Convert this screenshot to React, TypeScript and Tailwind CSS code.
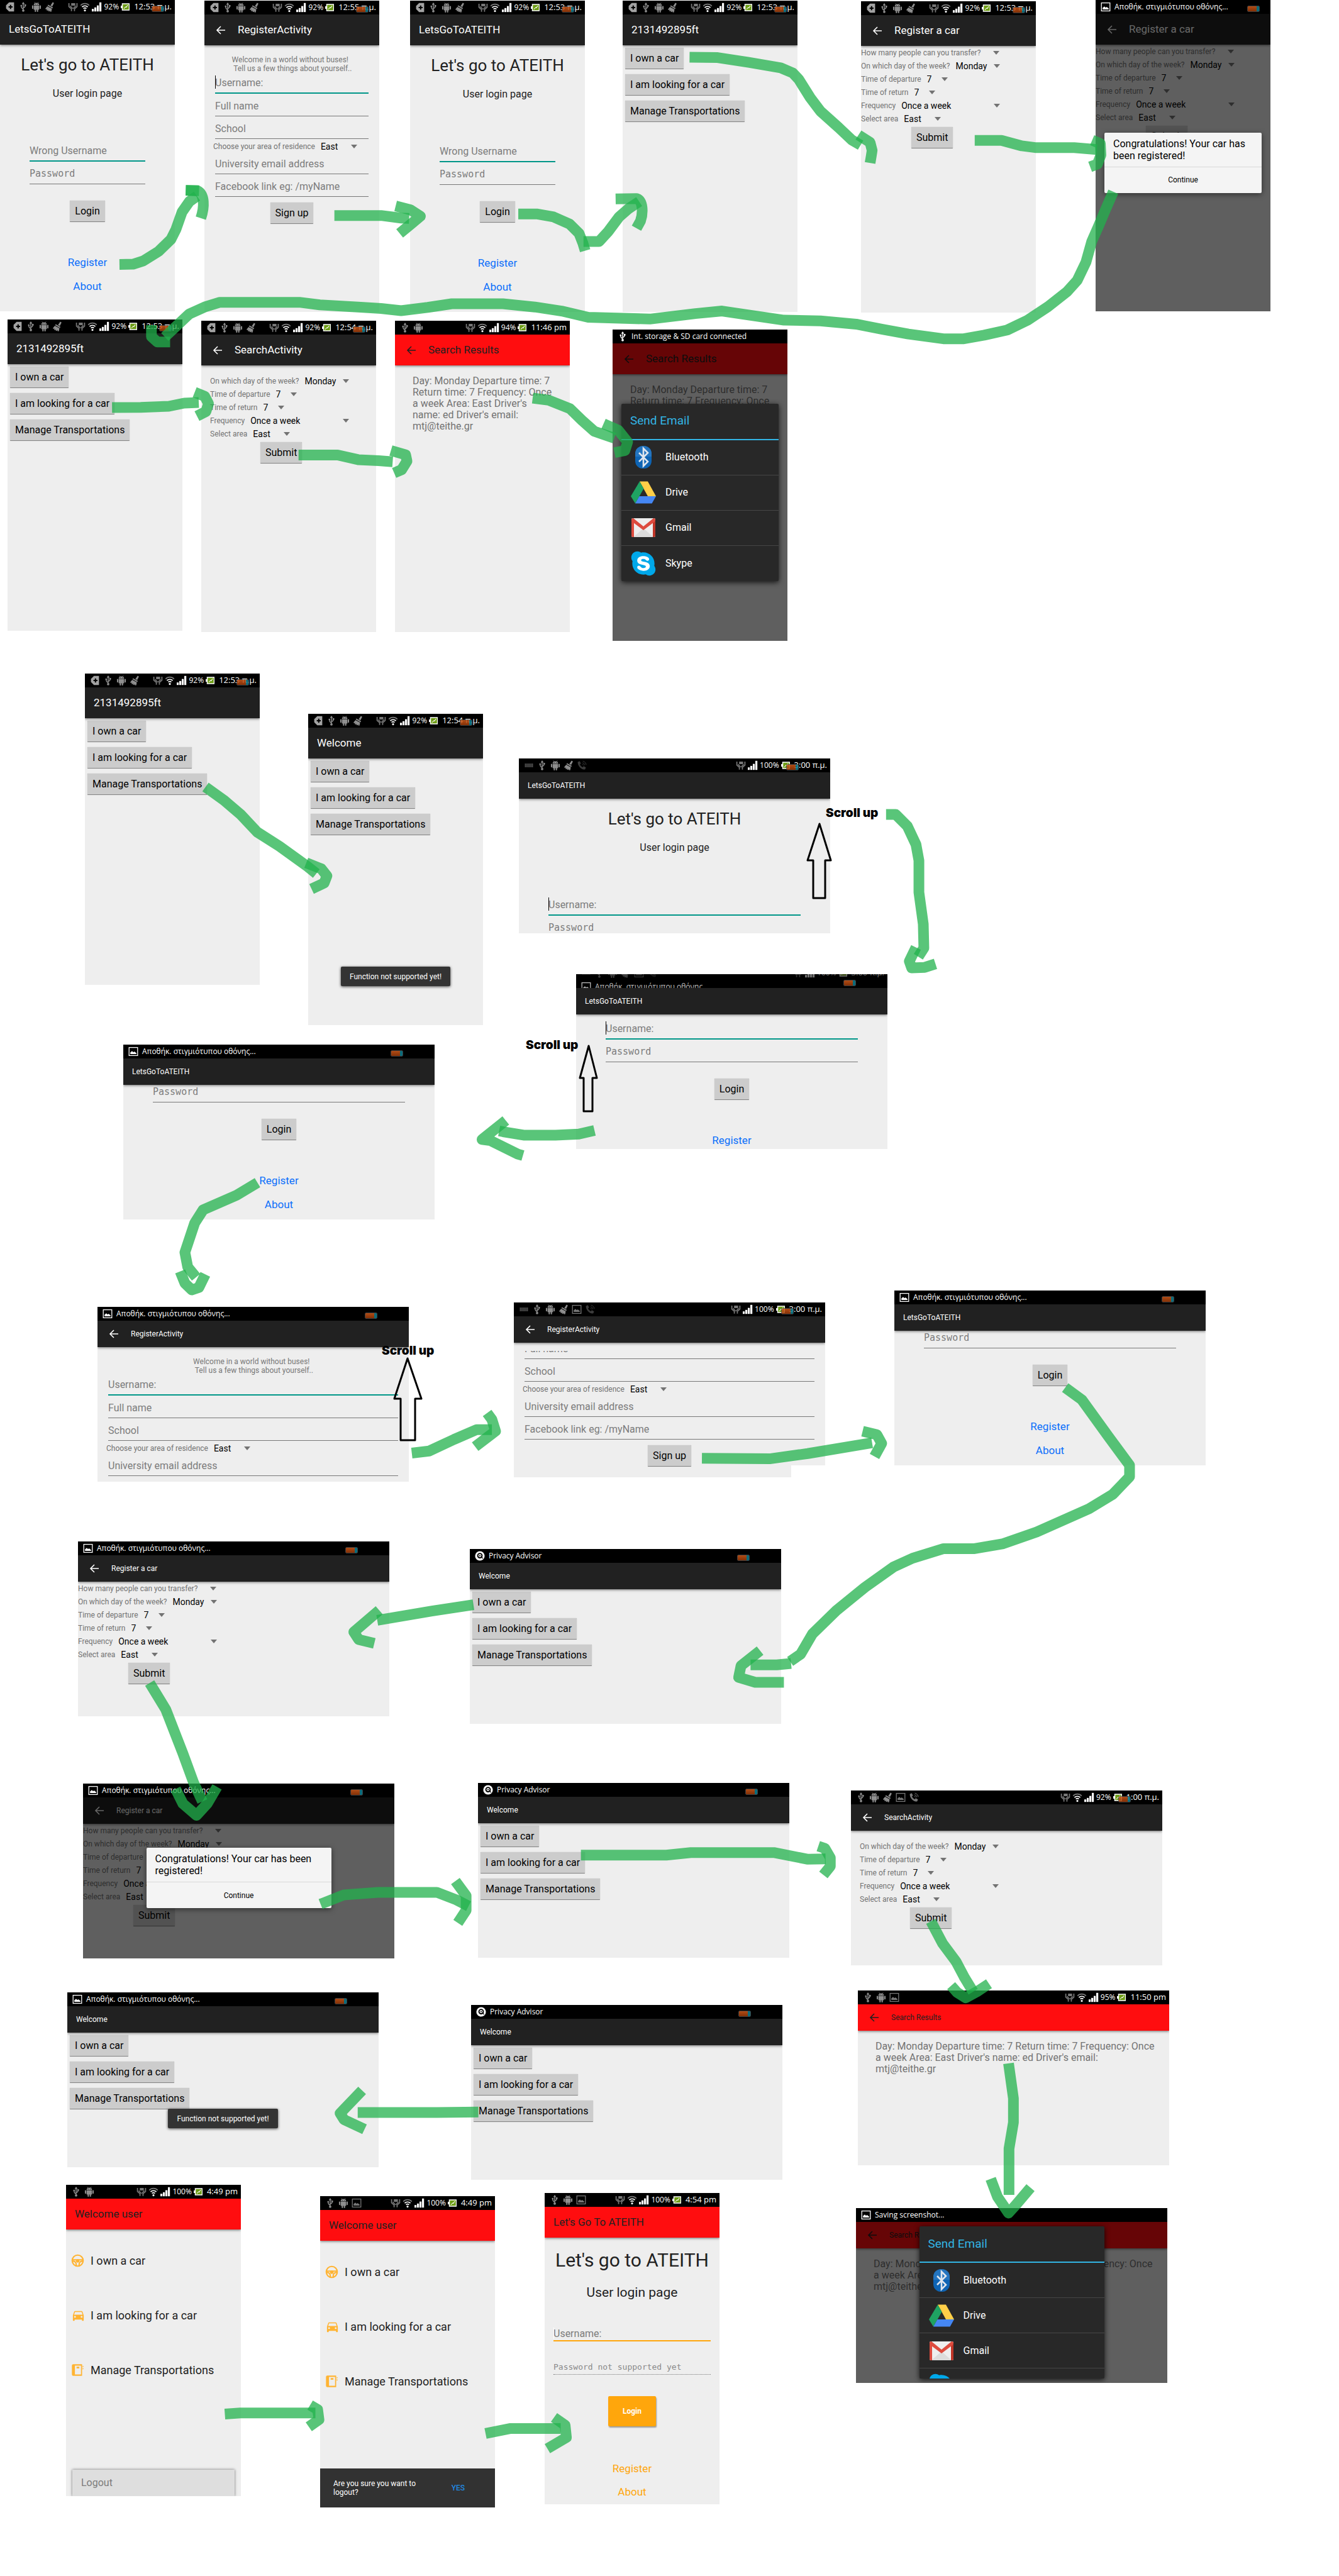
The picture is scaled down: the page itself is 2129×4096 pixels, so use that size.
import React from "react";
import { FaSkype } from "react-icons/fa";
import { MdDirectionsCar } from "react-icons/md";

/* ---------- status bar icons ---------- */

const small = "h-[16px] w-[16px] shrink-0";

function TagIcon() {
  return (
    <svg viewBox="0 0 20 20" className={small}>
      <path d="M8 1h10v18H8L2 13V7z" fill="#a3a3a3" />
      <path d="M11 6v8M7 10h8" stroke="#000" strokeWidth="2.6" />
    </svg>
  );
}

function UsbIcon({ bright = false }: { bright?: boolean }) {
  const c = bright ? "#fff" : "#8f8f8f";
  return (
    <svg viewBox="0 0 20 20" className={small}>
      <path d="M10 3v13M10 14c-3-1-4-3-4-6M10 12c3-1 4-2 4-5" fill="none" stroke={c} strokeWidth="1.8" />
      <path d="M10 0l3 4.5H7z" fill={c} />
      <circle cx="10" cy="17.3" r="2.4" fill={c} />
      <circle cx="6" cy="7.5" r="1.7" fill={c} />
      <rect x="12.4" y="5" width="3.2" height="3.2" fill={c} />
    </svg>
  );
}

function AndroidIcon() {
  return (
    <svg viewBox="0 0 20 20" className={small} fill="#8f8f8f">
      <path d="M4.6 6.2a5.4 4.4 0 0 1 10.8 0z" />
      <path d="M6 .5l2 3M14 .5l-2 3" stroke="#8f8f8f" strokeWidth="0.9" />
      <path d="M4.6 7h10.8v8.5H4.6z" />
      <rect x="1.2" y="7" width="2.5" height="7" rx="1.2" />
      <rect x="16.3" y="7" width="2.5" height="7" rx="1.2" />
      <rect x="6.6" y="14" width="2.6" height="6" rx="1.2" />
      <rect x="10.8" y="14" width="2.6" height="6" rx="1.2" />
      <circle cx="7.8" cy="4.3" r="0.7" fill="#000" />
      <circle cx="12.2" cy="4.3" r="0.7" fill="#000" />
    </svg>
  );
}

function BroomIcon() {
  return (
    <svg viewBox="0 0 20 20" className={small} fill="#8f8f8f">
      <path d="M16 .5l2.600 1.600-3.400 7-3.600-2z" />
      <path d="M7 5.600l9.400 5.200-1.200 2.200-9.400-5.400z" />
      <path d="M5.200 8.600l9.200 5.200-1.200 5.800-2.600-.2.300-2.400-1.700 2.100-2.400-.9 1-2.200-2.200 1.500-2-1.400 1.700-1.800-2.900.7-1-1.600z" />
    </svg>
  );
}

function CradleIcon() {
  return (
    <svg viewBox="0 0 20 20" className={small}>
      <path d="M6.500 2.500h8v5h-8z" fill="#777" />
      <path d="M2 2.500v7l5 4.500v4.500M18 2.500v7L13 14v4.500" fill="none" stroke="#777" strokeWidth="2.200" />
      <path d="M4.500 8l5 5.500M15.500 8l-5 5.500" stroke="#777" strokeWidth="2" />
    </svg>
  );
}

function KeyboardIcon() {
  return (
    <svg viewBox="0 0 20 20" className={small}>
      <path d="M2 7.5h16M2 10h16M2 12.5h16" stroke="#777" strokeWidth="1.6" strokeDasharray="1.6 0.8" />
    </svg>
  );
}

function PictureIcon({ bright = false }: { bright?: boolean }) {
  const c = bright ? "#fff" : "#777";
  return (
    <svg viewBox="0 0 20 20" className={small}>
      <rect x="1.5" y="2" width="17" height="16" fill="none" stroke={c} strokeWidth="1.6" />
      <path d="M4 15v-3l3.5-3 2.5 2.5 2-1.5 4 3v2z" fill={c} />
    </svg>
  );
}

function PhoneIcon({ faint = false }: { faint?: boolean }) {
  const c = faint ? "#3b3b3b" : "#777";
  return (
    <svg viewBox="0 0 20 20" className={small}>
      <path d="M2 3l4-1.5 2.200 4.600-2 2c1 2.400 2.800 4.300 5.400 5.600l2.200-2 4.400 2.500-1.700 4C9 18.500 1.500 11 2 3z" fill={c} />
      <path d="M11 7.500a3 3 0 0 1 2 2.200M11.500 4.500a6 6 0 0 1 4.300 5M12 1.500a9 9 0 0 1 6.800 7.500" fill="none" stroke={c} strokeWidth="1.200" />
    </svg>
  );
}

function WifiIcon() {
  return (
    <svg viewBox="0 0 20 20" className={small} fill="none" strokeWidth="2">
      <path d="M1.500 7a11.500 11.500 0 0 1 17 0" stroke="#777" />
      <path d="M4.300 10.200a7.800 7.800 0 0 1 11.400 0M7 13.300a4.200 4.200 0 0 1 6 0" stroke="#fff" />
      <circle cx="10" cy="17" r="2" fill="#fff" />
    </svg>
  );
}

function SignalIcon() {
  return (
    <svg viewBox="0 0 20 20" className={small} fill="#fff">
      <rect x="0" y="14" width="4" height="5" />
      <rect x="5" y="11" width="4" height="8" />
      <rect x="10" y="7" width="4" height="12" />
      <rect x="15" y="1" width="4" height="18" />
    </svg>
  );
}

function BatteryIcon() {
  return (
    <svg viewBox="0 0 14 12" className="h-[12px] w-[14px] shrink-0">
      <rect x="0" y="4" width="2" height="4" fill="#fff" />
      <rect x="2.500" y="1" width="11" height="10" fill="#6d9c14" stroke="#fff" strokeWidth="1.500" />
      <path d="M5 9l2.500-3 1 1L11 3 9 6.500l-1-1z" fill="#fff" stroke="#fff" strokeWidth="0.800" />
    </svg>
  );
}

function AdvisorIcon() {
  return (
    <svg viewBox="0 0 20 20" className={small}>
      <circle cx="10" cy="10" r="9.500" fill="#fff" />
      <circle cx="10" cy="9.500" r="4.300" fill="none" stroke="#000" strokeWidth="2.400" />
      <circle cx="10" cy="9.500" r="1.300" fill="#000" />
      <path d="M14 10v3.500l2 1.500" fill="none" stroke="#000" strokeWidth="1.600" />
    </svg>
  );
}

const icons = {
  tag: <TagIcon />,
  usb: <UsbIcon />,
  android: <AndroidIcon />,
  broom: <BroomIcon />,
  keyboard: <KeyboardIcon />,
  picture: <PictureIcon />,
  phone: <PhoneIcon />,
  faintPhone: <PhoneIcon faint />,
};
type IconName = keyof typeof icons;

/* ---------- status bar ---------- */

function Widget({ landscape }: { landscape?: boolean }) {
  return (
    <span
      className={`absolute top-[9px] flex h-[10px] w-[20px] overflow-hidden rounded-[2px] border border-[#4c4c4c] opacity-85 ${
        landscape ? "right-[50px]" : "right-[17px]"
      }`}
    >
      <span className="flex-1 bg-linear-to-b from-[#cf5a1a] to-[#9c3a08]" />
      <span className="w-[4px] bg-[#0d7f92]" />
    </span>
  );
}

function StatusIcons({ left, percent, time, wifi = true }: { left: IconName[]; percent: string; time: string; wifi?: boolean }) {
  return (
    <div className="flex h-[22px] shrink-0 items-center pr-[5px] pl-[8px] text-white">
      <div className="flex gap-[5px]">
        {left.map((n) => (
          <React.Fragment key={n}>{icons[n]}</React.Fragment>
        ))}
      </div>
      <div className="ml-auto flex items-center gap-[3px]">
        <CradleIcon />
        {wifi && <WifiIcon />}
        <SignalIcon />
        <span className="text-[12px]">{percent}</span>
        <BatteryIcon />
        <span className="pl-1 text-[13px] whitespace-nowrap">{time}</span>
      </div>
    </div>
  );
}

function StatusNote({ icon, text }: { icon: React.ReactNode; text: string }) {
  return (
    <div className="flex h-[22px] shrink-0 items-center gap-[6px] pl-[8px] text-[12px] whitespace-nowrap text-white">
      {icon}
      <span>{text}</span>
    </div>
  );
}

const phoneLeft: IconName[] = ["tag", "usb", "android", "broom"];
const savingNote = <StatusNote icon={<PictureIcon bright />} text="Αποθήκ. στιγμιότυπου οθόνης..." />;
const advisorNote = <StatusNote icon={<AdvisorIcon />} text="Privacy Advisor" />;
const phoneStatus = (time: string) => <StatusIcons left={phoneLeft} percent="92%" time={time} />;

/* ---------- screen frame ---------- */

type ScreenProps = {
  place: string;
  title: string;
  status: React.ReactNode;
  landscape?: boolean;
  widget?: boolean;
  back?: boolean;
  red?: boolean;
  dialog?: React.ReactNode;
  footer?: React.ReactNode;
  children: React.ReactNode;
};

function Screen({ place, title, status, landscape, widget, back, red, dialog, footer, children }: ScreenProps) {
  return (
    <section
      aria-label={title}
      className={`absolute flex flex-col overflow-hidden bg-[#eeeeee] ${landscape ? "h-[278px] w-[495px]" : "h-[495px] w-[278px]"} ${place}`}
    >
      <div className="relative h-[22px] shrink-0 overflow-hidden bg-black [font-family:'Open_Sans',sans-serif]">
        {status}
        {widget && <Widget landscape={landscape} />}
      </div>
      <header
        className={`relative z-10 flex shrink-0 items-center px-[14px] shadow-[0_1px_4px_rgba(0,0,0,0.55)] ${
          landscape ? "h-[42px]" : "h-[49px]"
        } ${red ? "bg-[#ff0d0f] text-[#212121]" : "bg-[#212121] text-white"}`}
      >
        {back && (
          <button type="button" aria-label="Back" className="mr-[18px] ml-[3px]">
            <svg viewBox="0 0 18 18" className="h-[18px] w-[18px]" fill="none" stroke="currentColor" strokeWidth="1.600">
              <path d="M16 9H3M9 3L3 9l6 6" />
            </svg>
          </button>
        )}
        <h2 className={`font-normal whitespace-nowrap ${landscape ? "text-[12px]" : "text-[17px]"}`}>{title}</h2>
      </header>
      <div className="relative min-h-0 flex-1 overflow-hidden">{children}</div>
      {footer}
      {dialog && (
        <div className="absolute inset-x-0 top-[22px] bottom-0 z-20 flex items-center justify-center bg-black/60">{dialog}</div>
      )}
    </section>
  );
}

/* ---------- controls ---------- */

function GreyButton({ children, extra = "" }: { children: React.ReactNode; extra?: string }) {
  return (
    <button
      type="button"
      className={`h-[34px] rounded-[1px] border-b border-[#858585] bg-[#cccccc] px-2 text-[16px] whitespace-nowrap text-black shadow-[0_0_1px_rgba(0,0,0,0.4)] ${extra}`}
    >
      {children}
    </button>
  );
}

function Field({ hint, active, cursor, password }: { hint: string; active?: boolean; cursor?: boolean; password?: boolean }) {
  return (
    <div className="relative">
      {cursor && <span className="absolute bottom-[8px] left-0 h-[21px] w-px bg-black" />}
      <input
        type={password ? "password" : "text"}
        aria-label={hint}
        placeholder={hint}
        className={`block h-[36px] w-full bg-transparent pt-[3px] outline-none placeholder:text-[#7c7c7c] ${
          active ? "border-b-2 border-[#009688]" : "border-b border-[#777777]"
        } ${password ? "text-[15px] [font-family:'DejaVu_Sans_Mono',monospace]" : "text-[16px]"}`}
      />
    </div>
  );
}

function Caret() {
  return (
    <svg viewBox="0 0 10 6" className="pointer-events-none absolute top-1/2 right-0 h-[6px] w-[10px] -translate-y-1/2" fill="#737373">
      <path d="M0 0h10L5 6z" />
    </svg>
  );
}

function Picker({ label, value, width, extra = "h-[21px] items-center" }: { label: string; value: string; width: string; extra?: string }) {
  return (
    <label className={`flex gap-[9px] text-[12px] whitespace-nowrap text-[#737373] ${extra}`}>
      {label}
      <span className={`relative ${width}`}>
        <select className="block h-4 w-full appearance-none bg-transparent text-[14px] leading-4 text-black outline-none" defaultValue={value}>
          <option>{value}</option>
        </select>
        <Caret />
      </span>
    </label>
  );
}

/* ---------- screen bodies ---------- */

function LoginBody({ shift = "", hint = "Username:", cursor }: { shift?: string; hint?: string; cursor?: boolean }) {
  return (
    <div className={shift}>
      <div className="flex flex-col items-center px-[47px] pt-[14px]">
        <h1 className="text-[26px] leading-[36px] whitespace-nowrap text-[#212121]">Let's go to ATEITH</h1>
        <p className="mt-[18px] text-[16px] leading-5 text-[#212121]">User login page</p>
        <div className="mt-[62px] w-full">
          <Field hint={hint} active cursor={cursor} />
          <Field hint="Password" password />
        </div>
        <GreyButton extra="mt-[26px]">Login</GreyButton>
        <a href="#register" className="mt-[52px] text-[17px] leading-6 text-[#0b6efb]">
          Register
        </a>
        <a href="#about" className="mt-[14px] text-[17px] leading-6 text-[#0b6efb]">
          About
        </a>
      </div>
    </div>
  );
}

function RegisterBody({ shift = "", cursor }: { shift?: string; cursor?: boolean }) {
  return (
    <div className={shift}>
      <div className="flex flex-col items-center px-[17px] pt-4">
        <p className="h-[25px] text-[12px] leading-[14px] whitespace-pre text-[#777777]">
          {"Welcome in a world without buses!\n Tell us a few things about yourself.."}
        </p>
        <div className="w-full">
          <Field hint="Username:" active cursor={cursor} />
          <Field hint="Full name" />
          <Field hint="School" />
          <div className="-ml-[3px]">
            <Picker label="Choose your area of residence" value="East" width="w-[58px]" extra="h-[20px] items-end leading-4" />
          </div>
          <Field hint="University email address" />
          <Field hint="Facebook link eg: /myName" />
        </div>
        <GreyButton extra="mt-[9px]">Sign up</GreyButton>
      </div>
    </div>
  );
}

function CarForm({ search }: { search?: boolean }) {
  return (
    <div className={search ? "p-[14px]" : ""}>
      {!search && <Picker label="How many people can you transfer?" value="" width="w-[21px] h-4" />}
      <Picker label="On which day of the week?" value="Monday" width="w-[70px]" />
      <Picker label="Time of departure" value="7" width="w-[33px]" />
      <Picker label="Time of return" value="7" width="w-[33px]" />
      <Picker label="Frequency" value="Once a week" width="w-[157px]" />
      <Picker label="Select area" value="East" width="w-[59px]" />
      <GreyButton extra="mt-[3px] ml-[80px]">Submit</GreyButton>
    </div>
  );
}

function MenuBody() {
  return (
    <div className="flex flex-col items-start gap-2 px-1 pt-1">
      <GreyButton>I own a car</GreyButton>
      <GreyButton>I am looking for a car</GreyButton>
      <GreyButton>Manage Transportations</GreyButton>
    </div>
  );
}

function Toast() {
  return (
    <div className="absolute inset-x-0 bottom-[62px] z-10 flex justify-center">
      <p
        role="status"
        className="flex h-[31px] items-center rounded-[2px] bg-[#333333] px-[14px] text-[12px] whitespace-nowrap text-white shadow-[0_1px_4px_rgba(0,0,0,0.7)]"
      >
        Function not supported yet!
      </p>
    </div>
  );
}

function ResultsBody({ lines }: { lines: string[] }) {
  return (
    <p className="flex flex-col px-[28px] pt-4 text-[16px] leading-[18px] whitespace-nowrap text-[#737373]">
      {lines.map((l) => (
        <span key={l}>{l}</span>
      ))}
    </p>
  );
}

const tallResults = [
  "Day: Monday Departure time: 7",
  "Return time: 7 Frequency: Once",
  "a week Area: East Driver's",
  "name: ed Driver's email:",
  "mtj@teithe.gr",
];
const wideResults = [
  "Day: Monday Departure time: 7 Return time: 7 Frequency: Once",
  "a week Area: East Driver's name: ed Driver's email:",
  "mtj@teithe.gr",
];

function Congrats({ lines, width }: { lines: string[]; width: string }) {
  return (
    <div role="dialog" aria-label="Car registered" className={`rounded-[2px] bg-[#f4f4f4] text-black shadow-[0_2px_8px_rgba(0,0,0,0.5)] ${width}`}>
      <p className="flex h-[55px] flex-col justify-center border-b border-[#d8d8d8] px-[14px] text-[16px] leading-[19px] whitespace-nowrap">
        {lines.map((l) => (
          <span key={l}>{l}</span>
        ))}
      </p>
      <button type="button" className="h-[41px] w-full text-[12px]">
        Continue
      </button>
    </div>
  );
}

function BluetoothLogo() {
  return (
    <svg viewBox="0 0 42 42" className="h-[42px] w-[42px]">
      <rect x="8" y="3" width="26" height="36" rx="12" fill="#0e64b4" />
      <path d="M8 20V15A13 12 0 0 1 34 15V20z" fill="#3a86cc" opacity="0.500" />
      <path d="M14 14l14 14-7 7V7l7 7-14 14" fill="none" stroke="#dfe6ee" strokeWidth="2.600" />
    </svg>
  );
}

function DriveLogo() {
  return (
    <svg viewBox="0 0 42 42" className="h-[42px] w-[42px]">
      <path d="M15 3.500h13L41 27H28z" fill="#ffcf48" />
      <path d="M15 3.500L21.500 15 8 38.500 1 27z" fill="#1fa262" />
      <path d="M14.500 27H41l-6.500 11.500H8z" fill="#4587f4" />
    </svg>
  );
}

function GmailLogo() {
  return (
    <svg viewBox="0 0 42 42" className="h-[42px] w-[42px]">
      <rect x="2" y="6" width="38" height="30" rx="2" fill="#eeeeee" />
      <path d="M5 36l16-14 16 14z" fill="#dcdcdc" />
      <path d="M2 8v26a2 2 0 0 0 2 2h2V11z" fill="#dd4b3e" />
      <path d="M40 8v26a2 2 0 0 1-2 2h-2V11z" fill="#bf3528" />
      <path d="M2 8.500A2.500 2.500 0 0 1 5 6l16 13L37 6a2.500 2.500 0 0 1 3 2.500l-1 3L21 25 3 11.500z" fill="#dd4b3e" />
    </svg>
  );
}

function SkypeLogo() {
  return (
    <span className="relative flex h-[42px] w-[42px] items-center justify-center">
      <span className="absolute h-[30px] w-[26px] rounded-full bg-white" />
      <FaSkype className="relative h-[44px] w-[44px] shrink-0 text-[#00a8ea]" />
    </span>
  );
}

function Chooser({ size }: { size: string }) {
  const apps = [
    { name: "Bluetooth", logo: <BluetoothLogo /> },
    { name: "Drive", logo: <DriveLogo /> },
    { name: "Gmail", logo: <GmailLogo /> },
    { name: "Skype", logo: <SkypeLogo /> },
  ];
  return (
    <div role="dialog" aria-label="Send Email" className={`overflow-hidden rounded-[2px] bg-[#282828] shadow-[0_2px_8px_rgba(0,0,0,0.8)] ${size}`}>
      <h3 className="flex h-[58px] items-center border-b-2 border-[#33b5e5] px-[14px] text-[19px] text-[#33b5e5]">Send Email</h3>
      <ul className="divide-y divide-[#464646]">
        {apps.map((a) => (
          <li key={a.name} className="h-[56px]">
            <button type="button" className="flex h-full w-full items-center gap-[14px] px-[14px] text-[16px] text-white">
              {a.logo}
              {a.name}
            </button>
          </li>
        ))}
      </ul>
    </div>
  );
}

function WheelIcon() {
  return (
    <svg viewBox="0 0 24 24" className="h-[21px] w-[21px] shrink-0" fill="none" stroke="#ffb433" strokeWidth="2.400">
      <circle cx="12" cy="12" r="10" />
      <path d="M3 10.500h18M3 13c5 0 6.500 3 6.500 8M21 13c-5 0-6.500 3-6.500 8" />
      <circle cx="12" cy="12.500" r="2" fill="#ffb433" />
    </svg>
  );
}

function BookIcon() {
  return (
    <svg viewBox="0 0 24 24" className="h-[21px] w-[21px] shrink-0">
      <path d="M4 1.500h16v21H4a2.500 2.500 0 0 1-2.500-2.500V4A2.500 2.500 0 0 1 4 1.500z" fill="#ffb433" />
      <path d="M7 4h11v16H7z" fill="#eeeeee" />
      <rect x="10" y="6" width="5" height="3" fill="#ffb433" />
      <path d="M21 4l2 1.500-2 1.500zM21 8l2 1.500-2 1.500z" fill="#ffb433" />
    </svg>
  );
}

function WelcomeBody() {
  const rows = [
    { name: "I own a car", icon: <WheelIcon /> },
    { name: "I am looking for a car", icon: <MdDirectionsCar className="h-[23px] w-[23px] shrink-0 text-[#ffb433]" /> },
    { name: "Manage Transportations", icon: <BookIcon /> },
  ];
  return (
    <ul className="pt-[6px]">
      {rows.map((r) => (
        <li key={r.name}>
          <button type="button" className="flex h-[87px] items-center pl-[8px] text-[18px] whitespace-nowrap text-[#212121]">
            <span className="flex w-[31px]">{r.icon}</span>
            {r.name}
          </button>
        </li>
      ))}
    </ul>
  );
}

function AmberLogin() {
  return (
    <div className="flex flex-col items-center px-[14px] pt-[16px]">
      <h1 className="text-[30px] leading-[40px] whitespace-nowrap text-[#212121]">Let's go to ATEITH</h1>
      <p className="mt-[19px] text-[21px] leading-6 text-[#212121]">User login page</p>
      <div className="relative mt-[34px] w-full">
        <span className="absolute bottom-[4px] left-0 h-[18px] w-px bg-white" />
        <input
          aria-label="Username"
          placeholder="Username:"
          className="block h-[32px] w-full border-b-2 border-[#ffa60c] bg-transparent pt-2 text-[16px] outline-none placeholder:text-[#7c7c7c]"
        />
      </div>
      <input
        aria-label="Password"
        type="password"
        placeholder="Password not supported yet"
        className="mt-[25px] h-[28px] w-full border-b border-dotted border-[#777777] bg-transparent pt-1 text-[13px] outline-none [font-family:'DejaVu_Sans_Mono',monospace] placeholder:text-[#8a8a8a]"
      />
      <button type="button" className="mt-[34px] h-[48px] w-[76px] rounded-[2px] bg-[#ffa60c] text-[12px] font-bold text-white shadow-[1px_2px_2px_rgba(0,0,0,0.35)]">
        Login
      </button>
      <a href="#register" className="mt-[55px] text-[17px] leading-6 text-[#ffa60c]">
        Register
      </a>
      <a href="#about" className="mt-[13px] text-[17px] leading-6 text-[#ffa60c]">
        About
      </a>
    </div>
  );
}

/* ---------- connectors ---------- */

const strokes: { transform: string; paths: string[] }[] = [
  {
    transform: "scale(.5798)",
    paths: [
      "M917 591L1045 591 1100 598 1122 599",
      "M1085 565L1125 575 1153 593 1130 612 1096 640",
      "M3053 526L3029 581 3013 619 2994 662 2978 719 2954 769 2926 800 2874 841 2818 878 2762 905 2699 919 2643 929 2587 929 2491 916 2420 903 2348 889 2250 880 2150 878 2053 864 1980 853 1907 860 1782 875 1613 870 1540 853 1467 842 1379 833 1239 833 1173 843 1100 852 1045 846 982 842 877 836 821 829 603 829 561 842 519 861 502 877 452 924",
      "M1891 157L1968 158 2053 171 2141 186 2174 200 2190 217 2222 268 2250 305 2300 350 2336 384 2360 398",
      "M1387 3073L1322 3125 1345 3128 1420 3165 1434 3169",
      "M2244 5063L2262 5069 2277 5095 2277 5118 2258 5142",
    ],
  },
  {
    transform: "scale(.40675 .3254)",
    paths: ["M467 1292L520 1291 560 1275 620 1228 668 1170 688 1120 712 1035 740 985 770 958", "M726 930L772 932C800 950 800 1010 785 1066", "M726 930L778 932"],
  },
  {
    transform: "translate(637.8 0) scale(.42524 .3254)",
    paths: ["M438 1046L510 1046 570 1060 630 1095 665 1140 680 1190 688 1225", "M682 1180L740 1180 775 1130 815 1060 850 1020 890 985", "M802 972L880 970C905 980 905 1040 895 1080L880 1115"],
  },
  {
    transform: "translate(1333.5 0) scale(.46221 .36238)",
    paths: ["M68 592L108 625 115 660 112 685 108 715", "M468 616L560 616 630 640 680 648 810 648 888 656", "M872 615L900 630 902 680 890 720 865 732"],
  },
  {
    transform: "translate(0 498.6) scale(.40675 .33281)",
    paths: [
      "M592 55L592 110 615 136 665 136",
      "M438 449L550 448 660 443 720 428 777 425",
      "M761 376L800 395 815 430 805 468 770 490",
      "M1167 676L1320 676 1400 698 1480 703 1535 708",
    ],
  },
  {
    transform: "translate(608.8 498.6) scale(.42524 .34018)",
    paths: ["M30 640L85 660 90 690 70 730 42 745", "M560 395L620 405 700 445 745 500 790 550 865 582", "M825 515L880 545 915 600 905 640 866 650"],
  },
  {
    transform: "translate(116 1055.2) scale(.44372 .37716)",
    paths: ["M475 520L540 575 600 635 660 710 740 770 840 855 872 885", "M836 840L890 865 910 895 900 925 855 950"],
  },
  {
    transform: "translate(800.1 1182.8) scale(.46221 .42154)",
    paths: [
      "M1317 266L1350 266 1390 310 1420 380 1430 440 1430 560 1445 680 1447 770 1428 803",
      "M1420 768L1397 820 1405 845 1450 843 1487 830",
      "M314 1458L260 1472 180 1476 70 1476 0 1463 -14 1460",
    ],
  },
  {
    transform: "translate(127.6 1646.6) scale(.44372 .46592)",
    paths: [
      "M635 502L560 545 440 595 410 640 375 740 385 790 415 825",
      "M358 805L375 845 400 868 425 860 448 815",
      "M1188 1425L1250 1418 1340 1378 1420 1345 1475 1345",
      "M1458 1288L1475 1310 1488 1350 1415 1403",
    ],
  },
  {
    transform: "translate(753.7 2029.3) scale(.75803 .46221)",
    paths: [
      "M478 626L620 628 700 610 835 573",
      "M815 533L845 545 855 575 840 620",
      "M1240 383L1275 425 1330 550 1375 650 1375 690 1340 750 1290 800 1180 880 1110 920 1050 937 985 937 920 970 880 1000 820 1070 760 1150 710 1230 685 1300 663 1325",
      "M665 1332L635 1337 580 1337",
      "M600 1288L560 1340 555 1380 590 1397 650 1397",
    ],
  },
  {
    transform: "translate(104.4 2435.2) scale(.77651 .66559)",
    paths: [
      "M835 175L750 190 638 212",
      "M642 188L590 240 600 258 632 267",
      "M172 362L205 425 240 530 262 600 280 645",
      "M225 615L240 650 268 678 290 650 310 610",
      "M522 890L570 868 640 862 760 862 800 880 825 895",
      "M798 835L820 870 820 905 803 935",
      "M1055 773L1230 773 1280 767 1450 767 1520 783 1556 782",
      "M845 1387L760 1388 598 1388",
      "M607 1335L562 1390 570 1405 612 1428",
    ],
  },
  {
    transform: "translate(1304.6 2812) scale(.38825 .6397)",
    paths: [
      "M452 380L500 435 555 480 590 520 625 555",
      "M535 540L560 557 595 570 640 555 690 535",
      "M770 733L790 820 790 880 772 945 772 1060",
      "M697 1020L725 1065 770 1105 800 1085 860 1042",
    ],
  },
  {
    transform: "translate(87 3449.8) scale(.70258 .35498)",
    paths: ["M385 1095L420 1090 590 1090", "M578 1055L595 1075 598 1120 575 1152", "M975 1182L1030 1160 1145 1160", "M1130 1110L1155 1145 1158 1200 1115 1250"],
  },
];

function Connectors() {
  return (
    <svg
      viewBox="0 0 2129 4096"
      aria-hidden="true"
      className="pointer-events-none absolute top-0 left-0 z-40 h-[4096px] w-[2129px]"
      fill="none"
    >
      <g stroke="#22b14c" strokeOpacity="0.750" strokeLinejoin="round">
        {strokes.map((s) => (
          <g key={s.transform} transform={s.transform}>
            {s.paths.map((d) => (
              <path key={d} d={d} strokeWidth="17" vectorEffect="non-scaling-stroke" />
            ))}
          </g>
        ))}
      </g>
      <g stroke="#000" strokeWidth="3" strokeLinejoin="round">
        <path d="M1303 1310L1321 1368H1312V1428H1293V1368H1284z" />
        <path d="M936 1663L949 1714H942V1767H928V1714H922z" />
        <path d="M648 2160L670 2224H660V2290H637V2224H627z" />
      </g>
    </svg>
  );
}

function ScrollNote({ place }: { place: string }) {
  return (
    <p className={`absolute z-30 text-[19px] leading-6 font-black whitespace-nowrap text-black [font-family:Inter,sans-serif] ${place}`}>
      Scroll up
    </p>
  );
}

/* ---------- page ---------- */

export default function App() {
  return (
    <main className="relative min-h-[4096px] w-full overflow-hidden bg-white [font-family:Roboto,sans-serif]">
      <Screen place="left-0 top-0" title="LetsGoToATEITH" status={phoneStatus("12:53 π.μ.")} widget>
        <LoginBody hint="Wrong Username" />
      </Screen>
      <Screen place="left-[325px] top-px" title="RegisterActivity" back status={phoneStatus("12:55 π.μ.")} widget>
        <RegisterBody cursor />
      </Screen>
      <Screen place="left-[652px] top-px" title="LetsGoToATEITH" status={phoneStatus("12:53 π.μ.")} widget>
        <LoginBody hint="Wrong Username" />
      </Screen>
      <Screen place="left-[990px] top-px" title="2131492895ft" status={phoneStatus("12:53 π.μ.")} widget>
        <MenuBody />
      </Screen>
      <Screen place="left-[1369px] top-[2px]" title="Register a car" back status={phoneStatus("12:53 π.μ.")} widget>
        <CarForm />
      </Screen>
      <Screen
        place="left-[1742px] top-0"
        title="Register a car"
        back
        status={savingNote}
        widget
        dialog={<Congrats width="w-[250px]" lines={["Congratulations! Your car has", "been registered!"]} />}
      >
        <CarForm />
      </Screen>

      <Screen place="left-[12px] top-[508px]" title="2131492895ft" status={phoneStatus("12:53 π.μ.")} widget>
        <MenuBody />
      </Screen>
      <Screen place="left-[320px] top-[510px]" title="SearchActivity" back status={phoneStatus("12:54 π.μ.")} widget>
        <CarForm search />
      </Screen>
      <Screen
        place="left-[628px] top-[510px]"
        title="Search Results"
        back
        red
        status={<StatusIcons left={["usb", "android"]} percent="94%" time="11:46 pm" />}
      >
        <ResultsBody lines={tallResults} />
      </Screen>
      <Screen
        place="left-[974px] top-[524px]"
        title="Search Results"
        back
        red
        status={<StatusNote icon={<UsbIcon bright />} text="Int. storage & SD card connected" />}
        dialog={<Chooser size="w-[250px]" />}
      >
        <ResultsBody lines={tallResults} />
      </Screen>

      <Screen place="left-[135px] top-[1071px]" title="2131492895ft" status={phoneStatus("12:53 π.μ.")} widget>
        <MenuBody />
      </Screen>
      <Screen place="left-[490px] top-[1135px]" title="Welcome" status={phoneStatus("12:54 π.μ.")} widget footer={<Toast />}>
        <MenuBody />
      </Screen>
      <Screen
        place="left-[825px] top-[1206px]"
        landscape
        title="LetsGoToATEITH"
        status={<StatusIcons left={["keyboard", "usb", "android", "broom", "faintPhone"]} percent="100%" time="3:00 π.μ." wifi={false} />}
        widget
      >
        <LoginBody cursor />
      </Screen>
      <Screen
        place="left-[916px] top-[1549px]"
        landscape
        title="LetsGoToATEITH"
        status={
          <div className="flex flex-col opacity-75">
            <div className="-mt-[13px] opacity-60">
              <StatusIcons left={["keyboard", "usb", "android", "broom", "picture", "faintPhone"]} percent="100%" time="3:00 π.μ." wifi={false} />
            </div>
            {savingNote}
          </div>
        }
        widget
      >
        <LoginBody shift="-mt-[146px]" cursor />
      </Screen>
      <Screen place="left-[196px] top-[1661px]" landscape title="LetsGoToATEITH" status={savingNote} widget>
        <LoginBody shift="-mt-[194px]" />
      </Screen>

      <Screen place="left-[155px] top-[2078px]" landscape title="RegisterActivity" back status={savingNote} widget>
        <RegisterBody />
      </Screen>
      <Screen
        place="left-[817px] top-[2071px]"
        landscape
        title="RegisterActivity"
        back
        status={
          <StatusIcons left={["keyboard", "usb", "android", "broom", "picture", "faintPhone"]} percent="100%" time="3:00 π.μ." wifi={false} />
        }
        widget
        footer={<div className="absolute right-0 bottom-0 h-[19px] w-[54px] bg-white" />}
      >
        <RegisterBody shift="-mt-[87px]" />
        <div className="absolute inset-x-0 top-0 h-[13px] bg-[#eeeeee]" />
      </Screen>
      <Screen place="left-[1422px] top-[2052px]" landscape title="LetsGoToATEITH" status={savingNote} widget>
        <LoginBody shift="-mt-[194px]" />
      </Screen>

      <Screen place="left-[124px] top-[2451px]" landscape title="Register a car" back status={savingNote} widget>
        <CarForm />
      </Screen>
      <Screen place="left-[747px] top-[2463px]" landscape title="Welcome" status={advisorNote} widget>
        <MenuBody />
      </Screen>

      <Screen
        place="left-[132px] top-[2836px]"
        landscape
        title="Register a car"
        back
        status={savingNote}
        widget
        dialog={<Congrats width="w-[294px]" lines={["Congratulations! Your car has been", "registered!"]} />}
      >
        <CarForm />
      </Screen>
      <Screen place="left-[760px] top-[2835px]" landscape title="Welcome" status={advisorNote} widget>
        <MenuBody />
      </Screen>
      <Screen
        place="left-[1353px] top-[2847px]"
        landscape
        title="SearchActivity"
        back
        status={<StatusIcons left={["usb", "android", "broom", "picture", "phone"]} percent="92%" time="1:00 π.μ." />}
        widget
      >
        <CarForm search />
      </Screen>

      <Screen place="left-[107px] top-[3168px]" landscape title="Welcome" status={savingNote} widget footer={<Toast />}>
        <MenuBody />
      </Screen>
      <Screen place="left-[749px] top-[3188px]" landscape title="Welcome" status={advisorNote} widget>
        <MenuBody />
      </Screen>
      <Screen
        place="left-[1364px] top-[3165px]"
        landscape
        title="Search Results"
        back
        red
        status={<StatusIcons left={["usb", "android", "picture"]} percent="95%" time="11:50 pm" />}
      >
        <ResultsBody lines={wideResults} />
      </Screen>
      <Screen
        place="left-[1361px] top-[3511px]"
        landscape
        title="Search Results"
        back
        red
        status={<StatusNote icon={<PictureIcon bright />} text="Saving screenshot..." />}
        dialog={<Chooser size="h-[242px] w-[294px]" />}
      >
        <ResultsBody lines={wideResults} />
      </Screen>

      <Screen
        place="left-[105px] top-[3474px]"
        title="Welcome user"
        red
        status={<StatusIcons left={["usb", "android"]} percent="100%" time="4:49 pm" />}
        footer={
          <button
            type="button"
            className="mx-[10px] h-[42px] shrink-0 bg-[#dedede] pl-[14px] text-left text-[16px] text-[#7c7c7c] shadow-[0_0_4px_rgba(0,0,0,0.55)]"
          >
            Logout
          </button>
        }
      >
        <WelcomeBody />
      </Screen>
      <Screen
        place="left-[509px] top-[3492px]"
        title="Welcome user"
        red
        status={<StatusIcons left={["usb", "android", "picture"]} percent="100%" time="4:49 pm" />}
        footer={
          <div className="flex h-[62px] shrink-0 items-center justify-between bg-[#323232] pr-[48px] pl-[21px] text-[12px] leading-[14px] text-white">
            <p>
              Are you sure you want to
              <br />
              logout?
            </p>
            <button type="button" className="font-medium text-[#2188e0]">
              YES
            </button>
          </div>
        }
      >
        <WelcomeBody />
      </Screen>
      <Screen
        place="left-[866px] top-[3487px]"
        title="Let's Go To ATEITH"
        red
        status={<StatusIcons left={["usb", "android", "picture"]} percent="100%" time="4:54 pm" />}
      >
        <AmberLogin />
      </Screen>

      <ScrollNote place="left-[1313px] top-[1281px]" />
      <ScrollNote place="left-[836px] top-[1650px]" />
      <ScrollNote place="left-[607px] top-[2136px]" />
      <Connectors />
    </main>
  );
}
